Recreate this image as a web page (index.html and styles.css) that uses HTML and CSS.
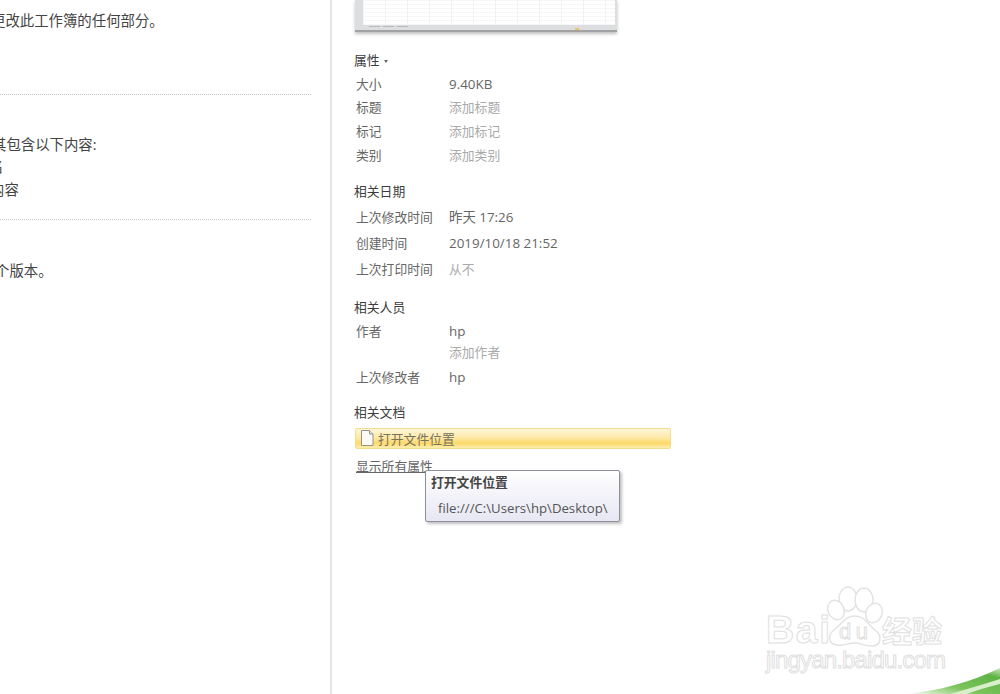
FILE: index.html
```html
<!DOCTYPE html>
<html lang="zh-CN">
<head>
    <meta charset="UTF-8">
    <title>信息</title>
    <link rel="stylesheet" href="styles.css">
</head>
<body>
    <div class="left-pane">
        <p class="note note-first">更改此工作簿的任何部分。</p>
        <div class="dots dots-first"></div>
        <p class="note note-second">其包含以下内容:</p>
        <p class="note note-third">名</p>
        <p class="note note-fourth">内容</p>
        <div class="dots dots-second"></div>
        <p class="note note-fifth">个版本。</p>
    </div>

    <div class="right-pane">
        <div class="thumb">
            <div class="thumb-sheet"></div>
            <div class="thumb-tabs"><span class="thumb-tab"></span><span class="thumb-tab"></span><span class="thumb-tab"></span></div>
            <div class="thumb-status"><span class="thumb-mark"></span></div>
        </div>

        <h3 class="title title-props">属性 <span class="caret"></span></h3>
        <div class="rows rows-props">
            <div class="row row-24"><span class="key">大小</span><span class="val latin">9.40KB</span></div>
            <div class="row row-24"><span class="key">标题</span><span class="val faint">添加标题</span></div>
            <div class="row row-24"><span class="key">标记</span><span class="val faint">添加标记</span></div>
            <div class="row row-24"><span class="key">类别</span><span class="val faint">添加类别</span></div>
        </div>

        <h3 class="title title-dates">相关日期</h3>
        <div class="rows rows-dates">
            <div class="row row-26"><span class="key">上次修改时间</span><span class="val latin">昨天 17:26</span></div>
            <div class="row row-26"><span class="key">创建时间</span><span class="val latin">2019/10/18 21:52</span></div>
            <div class="row row-26"><span class="key">上次打印时间</span><span class="val faint">从不</span></div>
        </div>

        <h3 class="title title-people">相关人员</h3>
        <div class="rows rows-people">
            <div class="row row-22"><span class="key">作者</span><span class="val latin">hp</span></div>
            <div class="row row-22"><span class="key"></span><span class="val faint">添加作者</span></div>
            <div class="row row-26 row-last"><span class="key">上次修改者</span><span class="val latin">hp</span></div>
        </div>

        <h3 class="title title-docs">相关文档</h3>
        <div class="open-btn">
            <svg class="doc-icon" width="14" height="16" viewBox="0 0 14 16">
                <path d="M1.5 .5H9.5L13 4V15.5H1.5Z" fill="#fbfaf4" stroke="#96938a"/>
                <path d="M9.5 .5V4H13" fill="#e8e6dc" stroke="#96938a"/>
            </svg>
            <span>打开文件位置</span>
        </div>
        <a class="show-all">显示所有属性</a>
    </div>

    <div class="tooltip">
        <div class="tooltip-title">打开文件位置</div>
        <div class="tooltip-path">file:///C:\Users\hp\Desktop\</div>
    </div>

    <svg class="watermark" width="200" height="100" viewBox="0 0 200 100">
        <g class="paw">
            <ellipse cx="88" cy="19" rx="9" ry="12"/>
            <ellipse cx="104" cy="20" rx="9" ry="12"/>
            <ellipse cx="76" cy="30" rx="8" ry="10" transform="rotate(-25 76 30)"/>
            <ellipse cx="114" cy="33" rx="8" ry="10" transform="rotate(25 114 33)"/>
            <path d="M95 36C105 36 108 45 115 50C123 56 121 66 112 66C103 66 102 63 95 63C88 63 85 66 77 65C68 64 67 55 75 49C82 44 85 36 95 36Z"/>
        </g>
        <text class="mark-big" x="6" y="63" textLength="64">Bai</text>
        <text class="mark-du" x="79" y="59" textLength="29">du</text>
        <text class="mark-cn" x="122" y="62">经验</text>
        <text class="mark-url" x="6" y="88" textLength="180">jingyan.baidu.com</text>
    </svg>

    <svg class="swoosh" width="95" height="27" viewBox="0 0 95 27">
        <defs>
            <linearGradient id="swooshFill" x1="0" y1="1" x2="1" y2="0">
                <stop offset="0" stop-color="#ffffff"/>
                <stop offset=".4" stop-color="#7cc45c"/>
                <stop offset=".8" stop-color="#5fb447"/>
                <stop offset="1" stop-color="#cfe9be"/>
            </linearGradient>
        </defs>
        <path d="M0 27C35 24 68 14 95 1V27Z" fill="url(#swooshFill)"/>
        <path d="M45 27C62 22 80 17 95 12V17C82 20 70 24 62 27Z" fill="#d8efca"/>
    </svg>
</body>
</html>
```

FILE: styles.css
```css
html, body {
    height: 100%;
}

body {
    margin: 0;
    display: flex;
    overflow: hidden;
    background-color: #fff;
    font-family: "Open Sans", "Noto Sans CJK SC", sans-serif;
    color: #666;
}

.left-pane {
    width: 332px;
    height: 694px;
    flex-shrink: 0;
    overflow: hidden;
    box-sizing: border-box;
    border-right: 2px solid #e6e6e6;
    padding-right: 19px;
    font-size: 14.4px;
    color: #444;
}

.note {
    margin: 0;
    height: 22.5px;
    line-height: 22.5px;
    white-space: nowrap;
}

.note-first {
    margin-top: 10px;
    margin-left: -9px;
}

.note-second {
    margin-top: 39px;
    margin-left: -8px;
}

.note-third {
    margin-left: -11px;
}

.note-fourth {
    margin-left: -10px;
}

.note-fifth {
    margin-top: 40px;
    margin-left: -5px;
}

.dots {
    border-top: 1px dotted #c4c4c4;
}

.dots-first {
    margin-top: 61px;
}

.dots-second {
    margin-top: 18px;
}

.right-pane {
    flex: 1;
    padding-left: 22px;
    font-size: 12.8px;
}

.thumb {
    position: relative;
    width: 262px;
    height: 32px;
    margin-left: 1px;
    box-sizing: border-box;
    padding: 0 2px;
    background-color: #dcdee0;
    border-bottom: 2px solid #a2a2a2;
    box-shadow: 0 2px 3px rgba(0, 0, 0, 0.25);
}

.thumb-sheet {
    height: 25px;
    margin-left: 6px;
    background-color: #fff;
    background-image:
        linear-gradient(to right, #f1f2f4 1px, transparent 1px),
        linear-gradient(to bottom, #f5f6f7 1px, transparent 1px);
    background-size: 22px 100%, 100% 4px;
}

.thumb-tabs {
    display: flex;
    gap: 3px;
    position: absolute;
    left: 14px;
    top: 26px;
}

.thumb-tab {
    width: 11px;
    height: 1px;
    background-color: #b8bbc0;
}

.thumb-status {
    display: flex;
    justify-content: flex-end;
    padding-right: 36px;
    height: 5px;
    align-items: flex-end;
}

.thumb-mark {
    width: 4px;
    height: 2px;
    background-color: #e6c660;
}

.title {
    margin: 0;
    height: 20px;
    line-height: 20px;
    font-size: 12.8px;
    font-weight: normal;
    color: #3c3c3c;
}

.title-props {
    margin-top: 18px;
}

.title-dates {
    margin-top: 14px;
}

.title-people {
    margin-top: 15px;
}

.title-docs {
    margin-top: 12px;
}

.caret {
    display: inline-block;
    margin-left: 1px;
    vertical-align: middle;
    border-left: 2.5px solid transparent;
    border-right: 2.5px solid transparent;
    border-top: 3px solid #666;
}

.rows-props {
    padding-top: 2.5px;
}

.rows-dates {
    padding-top: 2.5px;
}

.rows-people {
    padding-top: 4px;
}

.row {
    display: flex;
    padding-left: 2px;
    white-space: nowrap;
}

.row-22 {
    height: 21px;
    line-height: 21px;
}

.row-24 {
    height: 23.7px;
    line-height: 23.7px;
}

.row-26 {
    height: 26px;
    line-height: 26px;
}

.row-last {
    margin-top: 1px;
}

.key {
    width: 93px;
    flex-shrink: 0;
}

.val {
    color: #666;
}

.latin {
    font-size: 13.4px;
}

.faint {
    color: #aaa;
}

.open-btn {
    display: flex;
    align-items: center;
    gap: 4px;
    box-sizing: border-box;
    width: 316px;
    height: 21px;
    margin-top: 6px;
    margin-left: 1px;
    padding-left: 4px;
    border: 1px solid #f3dd8e;
    border-radius: 2px;
    background: linear-gradient(to bottom, #fdf6d8 0%, #fde9a8 45%, #fdd968 75%, #fdeeb0 100%);
    color: #77725c;
}

.doc-icon {
    flex-shrink: 0;
}

.show-all {
    display: inline-block;
    margin-top: 8px;
    margin-left: 2px;
    line-height: 19px;
    text-decoration: underline;
}

.tooltip {
    position: absolute;
    left: 425px;
    top: 470px;
    width: 195px;
    height: 52px;
    box-sizing: border-box;
    border: 1px solid #8e8f98;
    border-radius: 2px;
    background: linear-gradient(to bottom, #fff 0%, #e6e7f3 100%);
    box-shadow: 2px 2px 3px rgba(0, 0, 0, 0.25);
    font-size: 12.8px;
    color: #555;
}

.tooltip-title {
    margin-top: 1px;
    padding-left: 5px;
    line-height: 20px;
    font-weight: bold;
    color: #444;
}

.tooltip-path {
    margin-top: 6px;
    padding-left: 12px;
    line-height: 20px;
    font-size: 13.2px;
    white-space: nowrap;
}

.watermark {
    position: absolute;
    left: 760px;
    top: 580px;
}

.paw {
    fill: #fff;
    stroke: #e3e3e3;
    stroke-width: 1.5;
}

.mark-big,
.mark-du,
.mark-cn,
.mark-url {
    fill: #fff;
    stroke: #e0e0e0;
    stroke-width: 1;
    font-family: "Liberation Sans", sans-serif;
}

.mark-big {
    font-size: 39px;
    font-weight: bold;
}

.mark-du {
    font-size: 22px;
}

.mark-cn {
    font-size: 30px;
    font-family: "Noto Sans CJK SC", sans-serif;
    font-weight: bold;
}

.mark-url {
    font-size: 24px;
}

.swoosh {
    position: absolute;
    right: 0;
    bottom: 0;
}
```
